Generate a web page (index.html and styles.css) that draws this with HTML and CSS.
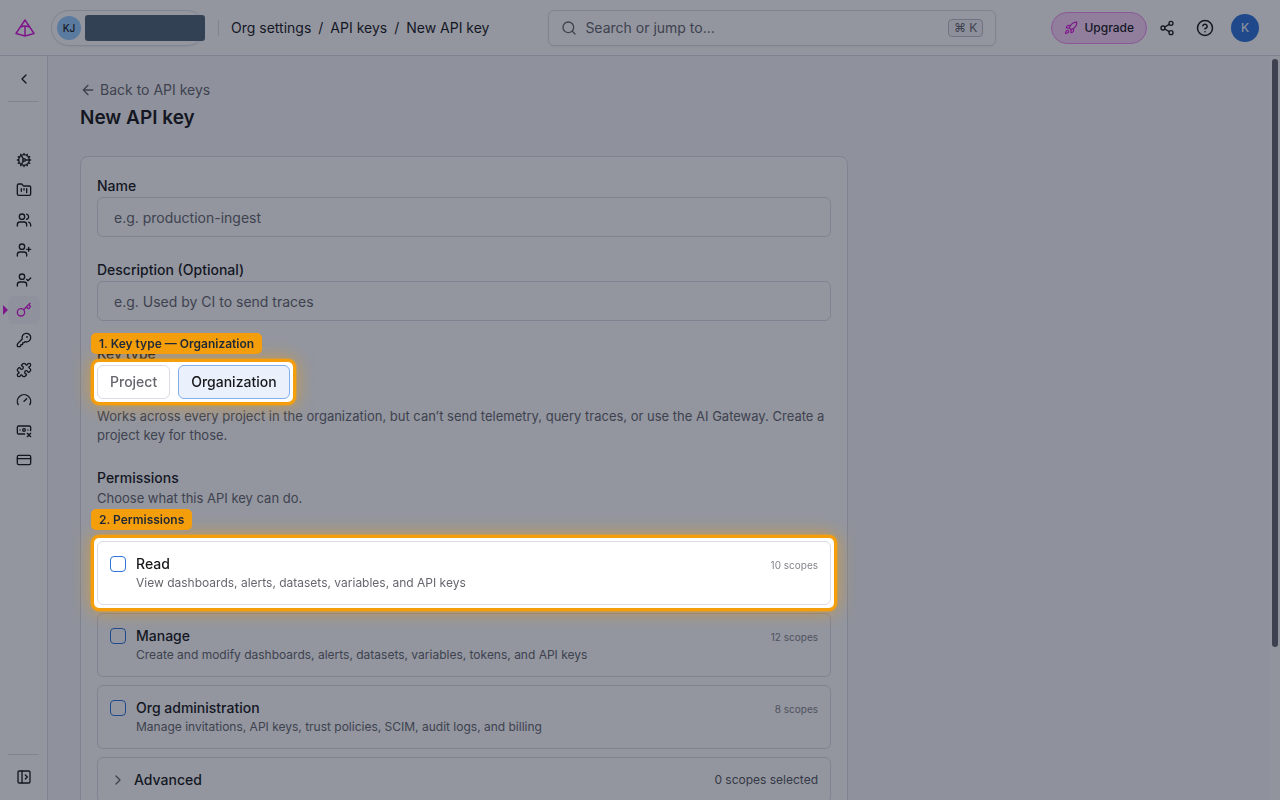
FILE: index.html
```html
<!DOCTYPE html>
<html lang="en">
<head>
  <meta charset="UTF-8" />
  <meta name="viewport" content="width=device-width, initial-scale=1" />
  <title>New API key</title>
  <link rel="stylesheet" href="styles.css">
</head>
<body>
  <header class="topbar">
    <div class="topbar-left">
      <a class="logo" href="#" aria-label="Home">
        <svg width="20" height="18" viewBox="0 0 20 18"><path d="M10 1 1 14.500 10 17 19 14.500ZM10 7V17M5.600 8Q10 6 14.400 8"/></svg>
      </a>
      <button class="org-switch" type="button" aria-label="Organization">
        <span class="org-avatar">KJ</span>
        <span class="org-name"></span>
      </button>
      <span class="divider"></span>
      <nav class="crumbs">
        <a href="#">Org settings</a><span>/</span><a href="#">API keys</a><span>/</span><a href="#">New API key</a>
      </nav>
    </div>
    <button class="search" type="button">
      <svg class="icon" viewBox="0 0 24 24"><circle cx="11" cy="11" r="8"/><path d="m21 21-4.300-4.300"/></svg>
      <span>Search or jump to...</span>
      <kbd>⌘ K</kbd>
    </button>
    <div class="topbar-right">
      <button class="upgrade" type="button">
        <svg class="icon" viewBox="0 0 24 24"><path d="M4.500 16.500c-1.500 1.260-2 5-2 5s3.740-.5 5-2c.71-.84.7-2.130-.09-2.910a2.180 2.180 0 0 0-2.910-.09z"/><path d="m12 15-3-3a22 22 0 0 1 2-3.950A12.880 12.880 0 0 1 22 2c0 2.720-.78 7.500-6 11a22.350 22.350 0 0 1-4 2z"/><path d="M9 12H4s.55-3.030 2-4c1.620-1.080 5 0 5 0M12 15v5s3.030-.55 4-2c1.080-1.620 0-5 0-5"/></svg>
        Upgrade
      </button>
      <button class="icon-btn" type="button" aria-label="Share">
        <svg class="icon" viewBox="0 0 24 24"><circle cx="18" cy="5" r="3"/><circle cx="6" cy="12" r="3"/><circle cx="18" cy="19" r="3"/><path d="m8.590 13.510 6.830 3.980M15.410 6.510l-6.820 3.980"/></svg>
      </button>
      <button class="icon-btn help" type="button" aria-label="Help">
        <svg class="icon" viewBox="0 0 24 24"><circle cx="12" cy="12" r="10"/><path d="M9.090 9a3 3 0 0 1 5.830 1c0 2-3 3-3 3M12 17h.01"/></svg>
      </button>
      <button class="user" type="button" aria-label="Account">K</button>
    </div>
  </header>

  <div class="shell">
    <aside class="sidebar">
      <a href="#" class="side-link" aria-label="Back"><svg class="icon" viewBox="0 0 24 24"><path d="m15 18-6-6 6-6"/></svg></a>
      <hr>
      <nav class="side-nav">
        <a href="#" class="side-link" aria-label="General"><svg class="icon" viewBox="0 0 24 24"><circle cx="12" cy="12" r="8"/><circle cx="12" cy="12" r="2"/><path d="M12 2v2M12 22v-2M17 20.660l-1-1.730M11 10.270 7 3.370M20.660 17l-1.730-1M3.340 7l1.730 1M14 12h8M2 12h2M20.660 7l-1.730 1M3.340 17l1.730-1M17 3.340l-1 1.730M11 13.730l-4 6.930"/></svg></a>
        <a href="#" class="side-link" aria-label="Projects"><svg class="icon" viewBox="0 0 24 24"><path d="M4 20h16a2 2 0 0 0 2-2V8a2 2 0 0 0-2-2h-7.930a2 2 0 0 1-1.660-.9l-.82-1.200A2 2 0 0 0 7.930 3H4a2 2 0 0 0-2 2v13c0 1.100.9 2 2 2ZM8 10v4M12 10v2M16 10v6"/></svg></a>
        <a href="#" class="side-link" aria-label="Members"><svg class="icon" viewBox="0 0 24 24"><circle cx="9" cy="7" r="4"/><path d="M16 21v-2a4 4 0 0 0-4-4H6a4 4 0 0 0-4 4v2M22 21v-2a4 4 0 0 0-3-3.870M16 3.130a4 4 0 0 1 0 7.750"/></svg></a>
        <a href="#" class="side-link" aria-label="Invitations"><svg class="icon" viewBox="0 0 24 24"><circle cx="9" cy="7" r="4"/><path d="M16 21v-2a4 4 0 0 0-4-4H6a4 4 0 0 0-4 4v2M19 8v6M22 11h-6"/></svg></a>
        <a href="#" class="side-link" aria-label="Roles"><svg class="icon" viewBox="0 0 24 24"><circle cx="9" cy="7" r="4"/><path d="M16 21v-2a4 4 0 0 0-4-4H6a4 4 0 0 0-4 4v2M16 11l2 2 4-4"/></svg></a>
        <a href="#" class="side-link active" aria-label="API keys"><svg class="icon" viewBox="0 0 24 24"><path d="m15.500 7.500 2.300 2.300a1 1 0 0 0 1.400 0l2.100-2.100a1 1 0 0 0 0-1.400L19 4M21 2l-9.600 9.600"/><circle cx="7.500" cy="15.500" r="5.500"/></svg></a>
        <a href="#" class="side-link" aria-label="Single sign-on"><svg class="icon" viewBox="0 0 24 24"><path d="M2.586 17.414A2 2 0 0 0 2 18.828V21a1 1 0 0 0 1 1h3a1 1 0 0 0 1-1v-1a1 1 0 0 1 1-1h1a1 1 0 0 0 1-1v-1a1 1 0 0 1 1-1h.172a2 2 0 0 0 1.414-.586l.814-.814a6.500 6.500 0 1 0-4-4z"/><circle cx="16.500" cy="7.500" r=".5"/></svg></a>
        <a href="#" class="side-link" aria-label="Integrations"><svg class="icon" viewBox="0 0 24 24"><path d="M15.390 4.390a1 1 0 0 0 1.680-.474 2.500 2.500 0 1 1 3.014 3.015 1 1 0 0 0-.474 1.680l1.683 1.682a2.414 2.414 0 0 1 0 3.414L19.610 15.390a1 1 0 0 1-1.680-.474 2.500 2.500 0 1 0-3.014 3.015 1 1 0 0 1 .474 1.680l-1.683 1.682a2.414 2.414 0 0 1-3.414 0L8.610 19.610a1 1 0 0 0-1.680.474 2.500 2.500 0 1 1-3.014-3.015 1 1 0 0 0 .474-1.680l-1.683-1.682a2.414 2.414 0 0 1 0-3.414L4.390 8.610a1 1 0 0 1 1.680.474 2.500 2.500 0 1 0 3.014-3.015 1 1 0 0 1-.474-1.680l1.683-1.682a2.414 2.414 0 0 1 3.414 0z"/></svg></a>
        <a href="#" class="side-link" aria-label="Usage"><svg class="icon" viewBox="0 0 24 24"><path d="m12 14 4-4M3.340 19a10 10 0 1 1 17.320 0"/></svg></a>
        <a href="#" class="side-link" aria-label="Spending caps"><svg class="icon" viewBox="0 0 24 24"><path d="M13 18H4a2 2 0 0 1-2-2V8a2 2 0 0 1 2-2h16a2 2 0 0 1 2 2v5M17 17l5 5M18 12h.01M22 17l-5 5M6 12h.01"/><circle cx="12" cy="12" r="2"/></svg></a>
        <a href="#" class="side-link" aria-label="Billing"><svg class="icon" viewBox="0 0 24 24"><rect x="2" y="5" width="20" height="14" rx="2"/><path d="M2 10h20"/></svg></a>
      </nav>
      <hr>
      <button type="button" class="side-link" aria-label="Expand sidebar"><svg class="icon" viewBox="0 0 24 24"><rect x="3" y="3" width="18" height="18" rx="2"/><path d="M9 3v18M14 9l3 3-3 3"/></svg></button>
    </aside>

    <main>
      <a class="back" href="#"><svg class="icon" viewBox="0 0 24 24"><path d="m12 19-7-7 7-7M19 12H5"/></svg>Back to API keys</a>
      <h1>New API key</h1>

      <form class="card">
        <div class="field">
          <label for="name">Name</label>
          <input type="text" id="name" placeholder="e.g. production-ingest">
        </div>
        <div class="field">
          <label for="description">Description (Optional)</label>
          <input type="text" id="description" placeholder="e.g. Used by CI to send traces">
        </div>
        <div class="field">
          <span class="label" id="keyType">Key type</span>
          <div class="key-types spotlight" role="group" aria-labelledby="keyType">
            <span class="step">1. Key type — Organization</span>
            <button type="button" aria-pressed="false">Project</button>
            <button type="button" class="selected" aria-pressed="true">Organization</button>
          </div>
          <p class="hint key-hint">Works across every project in the organization, but can’t send telemetry, query traces, or use the AI Gateway. Create a project key for those.</p>
        </div>
        <div class="field">
          <span class="label">Permissions</span>
          <p class="hint">Choose what this API key can do.</p>
          <div class="perms">
            <div class="spotlight">
              <span class="step">2. Permissions</span>
              <div class="perm">
                <input type="checkbox" id="read">
                <label for="read">Read<small>View dashboards, alerts, datasets, variables, and API keys</small></label>
                <span class="scopes">10 scopes</span>
              </div>
            </div>
            <div class="perm">
              <input type="checkbox" id="manage">
              <label for="manage">Manage<small>Create and modify dashboards, alerts, datasets, variables, tokens, and API keys</small></label>
              <span class="scopes">12 scopes</span>
            </div>
            <div class="perm">
              <input type="checkbox" id="admin">
              <label for="admin">Org administration<small>Manage invitations, API keys, trust policies, SCIM, audit logs, and billing</small></label>
              <span class="scopes">8 scopes</span>
            </div>
            <button type="button" class="advanced" aria-expanded="false">
              <svg class="icon" viewBox="0 0 24 24"><path d="m9 18 6-6-6-6"/></svg>
              <span>Advanced</span>
              <span class="selected-count">0 scopes selected</span>
            </button>
          </div>
        </div>
      </form>
      <div class="scrollbar"></div>
    </main>
  </div>

  <div class="backdrop"></div>
</body>
</html>
```
FILE: styles.css
```css
* {
  box-sizing: border-box;
}
body {
  margin: 0;
  height: 100vh;
  display: flex;
  flex-direction: column;
  overflow: hidden;
  background: #fff;
  color: #18181b;
  font-family: Inter, "Liberation Sans", sans-serif;
  font-size: 14px;
  line-height: 20px;
}
a {
  color: inherit;
  text-decoration: none;
}
button {
  font: inherit;
  color: inherit;
  background: none;
  border: none;
  padding: 0;
  cursor: pointer;
}
p {
  margin: 0;
}
.icon {
  width: 16px;
  height: 16px;
  flex: none;
  fill: none;
  stroke: currentColor;
  stroke-width: 2;
  stroke-linecap: round;
  stroke-linejoin: round;
}

/* top bar */
.topbar {
  flex: none;
  display: flex;
  align-items: center;
  height: 56px;
  padding: 0 21px 0 15px;
  border-bottom: 1px solid #dcdce6;
}
.topbar-left {
  flex: 1;
  display: flex;
  align-items: center;
}
.logo svg {
  display: block;
  fill: none;
  stroke: #d91ad9;
  stroke-width: 1.5;
  stroke-linejoin: round;
}
.org-switch {
  display: flex;
  align-items: center;
  gap: 4px;
  width: 154px;
  height: 36px;
  margin-left: 16px;
  padding-left: 5px;
  border: 1px solid #dcdce6;
  border-radius: 18px;
  box-shadow: 0 1px 2px rgba(0, 0, 0, 0.06);
}
.org-avatar {
  flex: none;
  width: 24px;
  height: 24px;
  border-radius: 50%;
  background: #99ccff;
  font-size: 10px;
  font-weight: 500;
  line-height: 24px;
}
.org-name {
  flex: none;
  position: relative;
  z-index: 20;
  width: 120px;
  height: 26px;
  border-radius: 3px;
  background: #334155;
}
.divider {
  width: 1px;
  height: 16px;
  margin: 0 12px 0 13px;
  background: #dcdce6;
}
.crumbs {
  display: flex;
  gap: 7px;
  white-space: nowrap;
}
.search {
  display: flex;
  align-items: center;
  gap: 8px;
  width: 448px;
  height: 36px;
  margin-right: 55px;
  padding: 0 12px;
  border: 1px solid #dcdce6;
  border-radius: 6px;
  box-shadow: 0 1px 2px rgba(0, 0, 0, 0.06);
  color: #66666e;
  text-align: left;
}
.search span {
  flex: 1;
}
.search kbd {
  padding: 0 5px;
  border: 1px solid #c0c0c8;
  border-radius: 4px;
  background: #f4f4f6;
  font-family: inherit;
  font-size: 12px;
  line-height: 16px;
}
.topbar-right {
  display: flex;
  align-items: center;
}
.upgrade {
  display: flex;
  align-items: center;
  gap: 6px;
  height: 32px;
  padding: 0 12px;
  margin-right: 12px;
  border: 1px solid #f090f0;
  border-radius: 16px;
  background: #fad4fa;
  font-size: 12px;
  font-weight: 500;
}
.upgrade .icon {
  width: 14px;
  height: 14px;
  color: #d91ad9;
}
.icon-btn {
  display: flex;
}
.help {
  margin: 0 17px 0 21px;
}
.help .icon {
  width: 18px;
  height: 18px;
}
.user {
  width: 28px;
  height: 28px;
  border-radius: 50%;
  background: #2f74dc;
  color: #fff;
  font-size: 12px;
}

/* sidebar */
.shell {
  flex: 1;
  display: flex;
  min-height: 0;
}
.sidebar {
  flex: none;
  display: flex;
  flex-direction: column;
  width: 48px;
  padding: 9px 8px;
  border-right: 1px solid #dcdce6;
}
.sidebar hr {
  width: 100%;
  margin: 8px 0;
  border: none;
  border-top: 1px solid #dcdce6;
}
.side-link {
  flex: none;
  display: flex;
  align-items: center;
  justify-content: center;
  width: 32px;
  height: 28px;
  border-radius: 6px;
}
.side-nav {
  flex: 1;
  display: flex;
  flex-direction: column;
  gap: 2px;
  padding-top: 36px;
}
.side-link.active {
  position: relative;
  background: #f8f8fa;
  color: #d91ad9;
}
.side-link.active::before {
  content: "";
  position: absolute;
  left: -5px;
  top: 9px;
  border: 5px solid transparent;
  border-left-color: #d91ad9;
  border-right: none;
}

/* page */
main {
  flex: 1;
  position: relative;
  min-width: 0;
  padding: 24px 32px;
  overflow: hidden;
  background: #f8f8fa;
}
.back {
  display: flex;
  align-items: center;
  gap: 4px;
  width: fit-content;
  color: #66666e;
}
h1 {
  margin: 4px 0 24px;
  font-size: 19px;
  font-weight: 600;
  line-height: 28px;
}
.card {
  display: flex;
  flex-direction: column;
  gap: 22px;
  max-width: 768px;
  padding: 18px 16px;
  border: 1px solid #dcdce6;
  border-radius: 8px;
  background: #fff;
}
.field > label,
.label {
  display: block;
  font-weight: 500;
  line-height: 22px;
}
input[type="text"] {
  display: block;
  width: 100%;
  height: 40px;
  padding: 0 16px;
  border: 1px solid #dcdce6;
  border-radius: 6px;
  background: #fff;
  font: inherit;
}
input::placeholder {
  color: #66666e;
}
.key-types {
  display: flex;
  gap: 8px;
  width: fit-content;
}
.key-types button {
  height: 34px;
  padding: 0 12px;
  border: 1px solid #dcdce6;
  border-radius: 6px;
  background: #fff;
  color: #66666e;
  font-weight: 500;
}
.key-types .selected {
  border-color: #82aeee;
  background: #eaf1fc;
  color: #18181b;
}
.hint {
  color: #66666e;
  font-size: 13px;
  line-height: 19px;
}
.key-hint {
  margin-top: 8px;
}
.perms {
  display: flex;
  flex-direction: column;
  gap: 8px;
  margin-top: 33px;
}
.perm,
.advanced {
  display: flex;
  align-items: flex-start;
  gap: 10px;
  padding: 12px;
  border: 1px solid #dcdce6;
  border-radius: 6px;
}
.perm input {
  appearance: none;
  flex: none;
  width: 16px;
  height: 16px;
  margin: 2px 0 0;
  border: 1px solid #2f74dc;
  border-radius: 4px;
  background: #fff;
}
.perm label {
  flex: 1;
  font-weight: 500;
}
.perm small {
  display: block;
  color: #66666e;
  font-size: 12px;
  font-weight: 400;
  line-height: 18px;
}
.scopes {
  color: #84848c;
  font-size: 10px;
  line-height: 22px;
}
.advanced {
  align-items: center;
  gap: 8px;
  font-weight: 500;
  text-align: left;
}
.advanced .icon {
  color: #66666e;
}
.selected-count {
  margin-left: auto;
  color: #55555d;
  font-size: 12px;
  font-weight: 400;
}
.scrollbar {
  position: absolute;
  top: 0;
  right: 0;
  bottom: 0;
  width: 11px;
  background: #fcfcfc;
}
.scrollbar::before {
  content: "";
  position: absolute;
  top: 3px;
  right: 2px;
  width: 6px;
  height: 79%;
  border-radius: 3px;
  background: #63656f;
}

/* guided tour */
.backdrop {
  position: fixed;
  inset: 0;
  z-index: 10;
  background: rgba(15, 23, 42, 0.45);
  pointer-events: none;
}
.spotlight {
  position: relative;
  z-index: 11;
}
.spotlight::before {
  content: "";
  position: absolute;
  inset: -6px;
  z-index: -1;
  border: 3px solid #f59e0b;
  border-radius: 8px;
  background: #fff;
  box-shadow: 0 0 0 1px rgba(245, 158, 11, 0.35), 0 0 18px rgba(245, 158, 11, 0.6);
}
.step {
  position: absolute;
  left: -6px;
  bottom: calc(100% + 11px);
  padding: 0 8px;
  border-radius: 5px;
  background: #f59e0b;
  color: #1f2937;
  font-size: 12px;
  font-weight: 600;
  line-height: 21px;
  white-space: nowrap;
}
```
